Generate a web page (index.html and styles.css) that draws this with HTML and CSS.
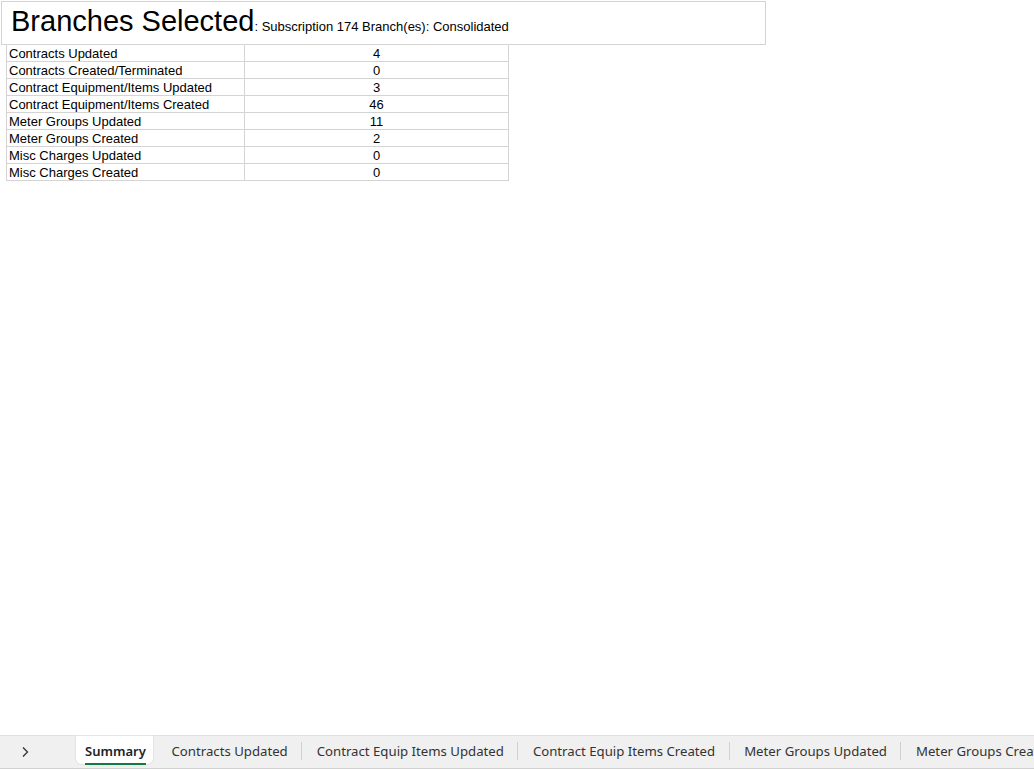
FILE: index.html
```html
<!DOCTYPE html>
<html lang="en">
<head>
	<meta charset="UTF-8">
	<title>Summary</title>
	<link rel="stylesheet" href="styles.css">
</head>
<body>
	<div class="sheet">
		<div class="title">
			<span class="big">Branches Selected</span><span class="sub">: Subscription 174 Branch(es): Consolidated</span>
		</div>
		<table class="summary">
			<tr><td class="name">Contracts Updated</td><td class="num">4</td></tr>
			<tr><td class="name">Contracts Created/Terminated</td><td class="num">0</td></tr>
			<tr><td class="name">Contract Equipment/Items Updated</td><td class="num">3</td></tr>
			<tr><td class="name">Contract Equipment/Items Created</td><td class="num">46</td></tr>
			<tr><td class="name">Meter Groups Updated</td><td class="num">11</td></tr>
			<tr><td class="name">Meter Groups Created</td><td class="num">2</td></tr>
			<tr><td class="name">Misc Charges Updated</td><td class="num">0</td></tr>
			<tr><td class="name">Misc Charges Created</td><td class="num">0</td></tr>
		</table>
	</div>
	<div class="tabs">
		<span class="arrow">
			<svg width="10" height="12" viewBox="0 0 10 12"><path d="M3 1.5 L7.5 6 L3 10.5" fill="none" stroke="#333" stroke-width="1.3"/></svg>
		</span>
		<span class="tab on"><span class="label">Summary</span></span>
		<span class="tab">Contracts Updated</span>
		<span class="tab">Contract Equip Items Updated</span>
		<span class="tab">Contract Equip Items Created</span>
		<span class="tab">Meter Groups Updated</span>
		<span class="tab last">Meter Groups Created</span>
	</div>
</body>
</html>
```

FILE: styles.css
```css
*{
	margin: 0;
	padding: 0;
	box-sizing: border-box;
}
html,body{
	height: 100%;
}
body{
	display: flex;
	flex-direction: column;
	overflow: hidden;
	background: #fff;
	font-family: "Liberation Sans", Arial, sans-serif;
	color: #000;
}
.sheet{
	flex: 1;
	padding-top: 1px;
}
.title{
	margin-left: 1px;
	width: 765px;
	height: 44px;
	border: 1px solid #d4d4d4;
	padding: 3px 0 0 9px;
	white-space: nowrap;
}
.title .big{
	font-size: 29px;
	line-height: 33px;
}
.title .sub{
	font-size: 13px;
}
.summary{
	margin-left: 6px;
	margin-top: -1px;
	border-collapse: collapse;
	font-size: 13px;
}
.summary td{
	border: 1px solid #d4d4d4;
	height: 17px;
	line-height: 15px;
	padding: 1px 2px 0;
}
.summary .name{
	width: 238px;
}
.summary .num{
	width: 264px;
	text-align: center;
}
.tabs{
	height: 34px;
	margin-bottom: 1px;
	background: #f0f0f0;
	border-top: 1px solid #e0e0e0;
	border-bottom: 1px solid #d0d0d0;
	display: flex;
	align-items: flex-start;
	white-space: nowrap;
	font-family: "Noto Sans", "Open Sans", sans-serif;
	font-size: 13.2px;
	color: #333;
}
.arrow{
	flex-shrink: 0;
	width: 76px;
	height: 32px;
	display: flex;
	align-items: center;
	padding-left: 20px;
}
.tab{
	height: 32px;
	line-height: 31px;
	padding: 0 14.5px;
	position: relative;
	flex-shrink: 0;
}
.tab::after{
	content: "";
	position: absolute;
	right: 0;
	top: 6px;
	height: 18px;
	border-right: 1px solid #d0d0d0;
}
.tab.on{
	width: 77px;
	height: 28px;
	padding: 0 0 0 9px;
	background: #fff;
	border-radius: 0 0 6px 6px;
	box-shadow: 0 0 0 1px #e4e4e4;
	margin-right: 4px;
	font-weight: 600;
	font-size: 13px;
	color: #222;
}
.tab.on::after{
	display: none;
}
.tab.on .label{
	display: inline-block;
	line-height: 24px;
	border-bottom: 2px solid #107c41;
	margin-top: 1px;
}
.tab.last::after{
	display: none;
}
```
